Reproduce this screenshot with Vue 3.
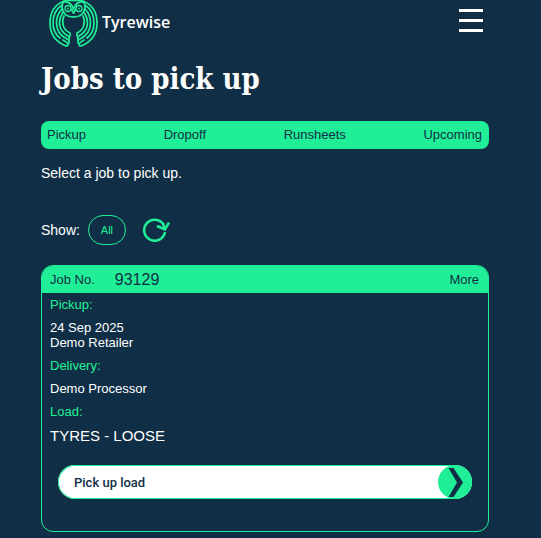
<template>
  <div class="page">
    <header class="header">
      <a class="brand" href="#">
        <svg class="owl" viewBox="0 0 49 48" fill="none" stroke="currentColor" stroke-width="1.7" stroke-linecap="round" stroke-linejoin="round" aria-hidden="true">
          <g v-for="side in sides" :key="side" :transform="side">
            <path d="M15 1C5 5 1 13 1 23C1 34 7 42 17 46Q19 46 19 44Q18 42 14 40" />
            <path d="M13 5C7 9 4 15 4 23C4 30 7 35 11 38" />
            <path d="M13 9C9 13 7.500 18 7.500 23C7.500 31 12 36 18 39Q21 40 20 43" />
            <path d="M13.500 13C11 17 10.500 20 10.500 23C10.500 29 14 33 19 36Q21 37 20 39" />
            <path d="M15 16C13.500 19 13.500 22 14 24C14.500 29 17 31 21 33V36" />
            <path d="M24.500 0.500H18Q13 1 13 7Q14 17 24.500 17" />
            <path d="M15 2Q22 1 24.500 9" />
            <circle cx="19" cy="8.500" r="3" stroke-width="1.300" />
            <circle cx="19" cy="8.500" r="0.900" fill="currentColor" stroke="none" />
            <path d="M22.500 9.500L24.500 13" />
          </g>
        </svg>
        <span class="brand-name">Tyrewise</span>
      </a>
      <button class="menu" type="button" aria-label="Menu">
        <span></span>
        <span></span>
        <span></span>
      </button>
    </header>

    <main>
      <h1 class="title">Jobs to pick up</h1>

      <nav class="tabs">
        <a v-for="tab in tabs" :key="tab" href="#">{{ tab }}</a>
      </nav>

      <p class="intro">Select a job to pick up.</p>

      <div class="filter">
        <span>Show:</span>
        <button class="all" type="button">All</button>
        <button class="refresh" type="button" aria-label="Refresh">
          <svg viewBox="0 0 28 26" fill="none" stroke="currentColor" stroke-width="2.500" aria-hidden="true">
            <path d="M21.500 7.500A10.500 10.500 0 1 0 23 15" />
            <path d="M15 9L23 12.500L27 5.500" />
            <path d="M21 6.500L23 12" />
          </svg>
        </button>
      </div>

      <article class="job">
        <div class="job-head">
          <span class="job-label">Job No.</span>
          <span class="job-number">{{ job.number }}</span>
          <a class="more" href="#">More</a>
        </div>
        <div class="job-body">
          <h2>Pickup:</h2>
          <p>{{ job.date }}<br />{{ job.retailer }}</p>
          <h2>Delivery:</h2>
          <p>{{ job.processor }}</p>
          <h2>Load:</h2>
          <p class="load">{{ job.load }}</p>
          <button class="pickup" type="button">
            <span>Pick up load</span>
            <svg viewBox="0 0 34 34" aria-hidden="true">
              <circle cx="17" cy="17" r="17" fill="#21ef97" />
              <path d="M10.500 3H15.500L25 17.500L15.500 32H10.500L19 17.500Z" fill="#102f46" />
            </svg>
          </button>
        </div>
      </article>
    </main>
  </div>
</template>

<script setup>
const sides = ['translate(0 0)', 'translate(49 0) scale(-1 1)'];

const tabs = ['Pickup', 'Dropoff', 'Runsheets', 'Upcoming'];

const job = {
  number: '93129',
  date: '24 Sep 2025',
  retailer: 'Demo Retailer',
  processor: 'Demo Processor',
  load: 'TYRES - LOOSE',
};
</script>

<style>
body {
  margin: 0;
  background: #102f46;
}
</style>

<style scoped>
.page {
  padding: 0 52px 6px 41px;
  color: #fff;
  font-family: "Liberation Sans", Arial, sans-serif;
  font-size: 14px;
}

a {
  color: inherit;
  text-decoration: none;
}

button {
  padding: 0;
  border: 0;
  background: none;
  font-family: inherit;
  cursor: pointer;
}

.header {
  display: flex;
  align-items: flex-start;
  justify-content: space-between;
  height: 48px;
}

.brand {
  display: flex;
  align-items: center;
  gap: 4px;
  padding-left: 8px;
}

.owl {
  width: 49px;
  height: 48px;
  color: #21ef97;
}

.brand-name {
  padding-bottom: 4px;
  font-family: "Open Sans", sans-serif;
  font-size: 16px;
  font-weight: 600;
}

.menu {
  display: flex;
  flex-direction: column;
  gap: 7px;
  padding: 9px 6px;
}

.menu span {
  width: 24px;
  height: 3px;
  background: #fff;
}

.title {
  margin: 12px 0 22px;
  font-family: "DejaVu Serif Condensed", "DejaVu Serif", serif;
  font-size: 29px;
  font-weight: 700;
  line-height: 39px;
}

.tabs {
  display: flex;
  justify-content: space-between;
  padding: 0 7px 0 6px;
  border-radius: 8px;
  background: #21ef97;
  color: #102f46;
  font-size: 13px;
  line-height: 28px;
}

.intro {
  margin: 16px 0 34px;
  line-height: 16px;
}

.filter {
  display: flex;
  align-items: center;
  margin-bottom: 20px;
}

.all {
  width: 38px;
  height: 30px;
  margin: 0 16px 0 8px;
  border: 1px solid #21ef97;
  border-radius: 15px;
  color: #21ef97;
  font-size: 11px;
}

.refresh {
  height: 26px;
  color: #21ef97;
}

.refresh svg {
  display: block;
  width: 28px;
  height: 26px;
}

.job {
  overflow: hidden;
  border: 1px solid #21ef97;
  border-radius: 12px;
}

.job-head {
  display: flex;
  align-items: center;
  height: 27px;
  padding: 0 9px 0 8px;
  background: #21ef97;
  color: #102f46;
  font-size: 13px;
}

.job-number {
  margin-left: 20px;
  font-size: 16px;
}

.more {
  margin-left: auto;
}

.job-body {
  padding: 4px 16px 32px 8px;
  font-size: 13px;
  line-height: 15px;
}

h2 {
  margin: 0 0 8px;
  color: #21ef97;
  font-size: 13px;
  font-weight: 400;
}

p {
  margin: 0 0 8px;
}

.load {
  margin-bottom: 20px;
  font-size: 15px;
  line-height: 18px;
}

.pickup {
  display: flex;
  align-items: center;
  justify-content: space-between;
  width: calc(100% - 8px);
  height: 34px;
  margin-left: 8px;
  padding-left: 16px;
  border-radius: 17px;
  background: #fff;
  box-shadow: inset 0 0 0 1px #21ef97;
  color: #102f46;
  font-family: Roboto, sans-serif;
  font-size: 13px;
  font-weight: 500;
}

.pickup svg {
  width: 34px;
  height: 34px;
}
</style>
